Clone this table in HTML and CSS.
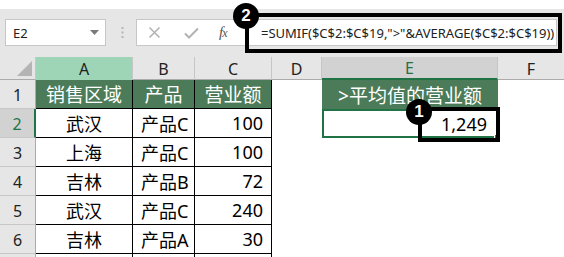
FILE: index.html
```html
<!DOCTYPE html>
<html lang="zh-CN">
<head>
<meta charset="utf-8">
<title>SUMIF 平均值</title>
<link rel="stylesheet" href="styles.css">
</head>
<body>
<div class="app">
  <div class="topband"></div>
  <div class="toolbar">
    <div class="namebox">
      <span class="ref">E2</span>
      <svg class="caret" width="9" height="5" viewBox="0 0 9 5"><path d="M0 0h9L4.5 5z" fill="#7a7a7a"/></svg>
    </div>
    <svg class="grip" width="3" height="11" viewBox="0 0 3 11">
      <rect x="0.5" y="0" width="2" height="2" fill="#b5b5b5"/>
      <rect x="0.5" y="4.5" width="2" height="2" fill="#b5b5b5"/>
      <rect x="0.5" y="9" width="2" height="2" fill="#b5b5b5"/>
    </svg>
    <div class="fxbtns">
      <svg class="btn" width="13" height="13" viewBox="0 0 13 13"><path d="M1.5 1.5l10 10M11.5 1.5l-10 10" stroke="#b3b3b3" stroke-width="1.6" fill="none"/></svg>
      <svg class="btn" width="15" height="12" viewBox="0 0 15 12"><path d="M1 6.5l4 4L14 1.5" stroke="#b3b3b3" stroke-width="2" fill="none"/></svg>
      <span class="fx">f<i>x</i></span>
    </div>
    <div class="formula">=SUMIF($C$2:$C$19,"&gt;"&amp;AVERAGE($C$2:$C$19))</div>
  </div>

  <div class="sheet">
    <div class="corner"><svg width="15" height="15" viewBox="0 0 15 15"><path d="M15 0V15H0z" fill="#b4b4b4"/></svg></div>
    <div class="colhead sel-a">A</div>
    <div class="colhead">B</div>
    <div class="colhead">C</div>
    <div class="colhead">D</div>
    <div class="colhead sel-e">E</div>
    <div class="colhead last">F</div>

    <div class="rowhead">1</div>
    <div class="cell tb head">销售区域</div>
    <div class="cell tb head">产品</div>
    <div class="cell tb head">营业额</div>
    <div class="cell"></div>
    <div class="cell head">&gt;平均值的营业额</div>
    <div class="cell"></div>

    <div class="rowhead sel-row">2</div>
    <div class="cell tb c">武汉</div>
    <div class="cell tb l">产品C</div>
    <div class="cell tb r">100</div>
    <div class="cell"></div>
    <div class="cell r active">1,249<span class="handle"></span></div>
    <div class="cell"></div>

    <div class="rowhead">3</div>
    <div class="cell tb c">上海</div>
    <div class="cell tb l">产品C</div>
    <div class="cell tb r">100</div>
    <div class="cell"></div>
    <div class="cell"></div>
    <div class="cell"></div>

    <div class="rowhead">4</div>
    <div class="cell tb c">吉林</div>
    <div class="cell tb l">产品B</div>
    <div class="cell tb r">72</div>
    <div class="cell"></div>
    <div class="cell"></div>
    <div class="cell"></div>

    <div class="rowhead">5</div>
    <div class="cell tb c">武汉</div>
    <div class="cell tb l">产品C</div>
    <div class="cell tb r">240</div>
    <div class="cell"></div>
    <div class="cell"></div>
    <div class="cell"></div>

    <div class="rowhead">6</div>
    <div class="cell tb c">吉林</div>
    <div class="cell tb l">产品A</div>
    <div class="cell tb r">30</div>
    <div class="cell"></div>
    <div class="cell"></div>
    <div class="cell"></div>

    <div class="rowhead">7</div>
    <div class="cell tb c"></div>
    <div class="cell tb l"></div>
    <div class="cell tb r"></div>
    <div class="cell"></div>
    <div class="cell"></div>
    <div class="cell"></div>
  </div>

  <!-- numbered callouts -->
  <div class="callout callout-formula"></div>
  <div class="badge badge-formula">2</div>
  <div class="callout callout-result"></div>
  <div class="badge badge-result">1</div>
</div>
</body>
</html>
```

FILE: styles.css
```css
* { box-sizing: border-box; }

html, body {
  margin: 0;
  padding: 0;
  background: #ffffff;
}

.app {
  position: relative;
  width: 564px;
  height: 257px;
  overflow: hidden;
  font-family: "Noto Sans", "Noto Sans CJK SC", sans-serif;
  color: #000;
}

.topband {
  height: 9px;
  background: #ffffff;
}

/* formula bar */
.toolbar {
  height: 48px;
  background: #e6e6e6;
  display: flex;
  align-items: center;
  padding-left: 5px;
}

.namebox {
  width: 101px;
  height: 27px;
  background: #fff;
  border: 1px solid #c6c6c6;
  display: flex;
  align-items: center;
  justify-content: space-between;
  padding: 0 6px 0 7px;
  margin-top: -1px;
}

.namebox .ref {
  font-size: 13px;
  color: #222;
}

.grip {
  margin-left: 15px;
  margin-top: -1px;
}

.fxbtns {
  margin-left: 12px;
  width: 109px;
  height: 27px;
  background: #fff;
  border: 1px solid #c6c6c6;
  border-right: none;
  display: flex;
  align-items: center;
  padding-left: 11px;
  margin-top: -1px;
}

.fxbtns .btn + .btn { margin-left: 23px; }

.fx {
  margin-left: 20px;
  font-family: "Liberation Serif", serif;
  font-style: italic;
  font-size: 15px;
  color: #555;
  letter-spacing: -1px;
}

.fx i { font-size: 12px; }

.formula {
  margin-left: 2px;
  width: 310px;
  height: 27px;
  background: #fff;
  border: 1px solid #c6c6c6;
  margin-top: -1px;
  display: flex;
  align-items: center;
  padding-left: 13px;
  font-size: 13px;
  color: #222;
  white-space: nowrap;
  overflow: hidden;
}

/* worksheet */
.sheet {
  display: grid;
  grid-template-columns: 36px 97px 62px 77px 50px 176px 66px;
  grid-template-rows: 23px repeat(7, 29px);
}

.corner {
  background: #e6e6e6;
  border-right: 1px solid #c6c6c6;
  border-bottom: 1px solid #ababab;
  display: flex;
  align-items: flex-end;
  justify-content: flex-end;
  padding: 0 3px 3px 0;
}

.colhead {
  background: #e6e6e6;
  border-right: 1px solid #c6c6c6;
  border-bottom: 1px solid #ababab;
  display: flex;
  align-items: center;
  justify-content: center;
  font-size: 16px;
  color: #222;
  padding-top: 1px;
}

.colhead.last { border-right: none; }

.colhead.sel-a {
  background: #9fd5b7;
  border-bottom-color: #9fd5b7;
}

.colhead.sel-e {
  background: #d2d2d2;
  color: #217346;
  border-bottom: 2px solid #217346;
}

.rowhead {
  background: #e6e6e6;
  border-right: 1px solid #ababab;
  border-bottom: 1px solid #c6c6c6;
  display: flex;
  align-items: center;
  justify-content: center;
  font-size: 16px;
  color: #222;
  padding-top: 2px;
}

.rowhead.sel-row {
  background: #d2d2d2;
  color: #217346;
  border-right: 2px solid #217346;
}

.cell {
  position: relative;
  display: flex;
  align-items: center;
  font-size: 18px;
  white-space: nowrap;
}

.cell.tb {
  border-right: 1px solid #000;
  border-bottom: 1px solid #000;
}

.cell.head {
  background: #4b7b58;
  color: #fff;
  justify-content: center;
  font-size: 19px;
}

.cell.c { justify-content: center; }
.cell.l { padding-left: 8px; }
.cell.r { justify-content: flex-end; padding-right: 8px; }

.cell.active {
  border: 2px solid #217346;
  padding-right: 9px;
  padding-top: 1px;
}

.handle {
  position: absolute;
  right: -4px;
  bottom: -4px;
  width: 6px;
  height: 6px;
  background: #217346;
  border: 1px solid #fff;
}

/* numbered callouts */
.callout {
  position: absolute;
  border: 4px solid #000;
}

.callout-formula {
  left: 245px;
  top: 13px;
  width: 317px;
  height: 40px;
}

.callout-result {
  left: 418px;
  top: 107px;
  width: 82px;
  height: 35px;
}

.badge {
  position: absolute;
  width: 26px;
  height: 26px;
  border-radius: 50%;
  background: #000;
  color: #fff;
  font-family: "Liberation Sans", sans-serif;
  font-weight: bold;
  font-size: 17px;
  display: flex;
  align-items: center;
  justify-content: center;
}

.badge-formula { left: 233px; top: 3px; }
.badge-result { left: 406px; top: 99px; }
```
